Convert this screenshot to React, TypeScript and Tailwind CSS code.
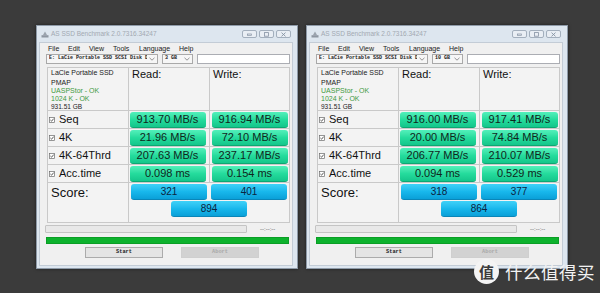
import React from 'react';

type Row = { label: string; read: string; write: string };
type Bench = { size: string; rows: Row[]; score: [string, string, string] };

const benches: Bench[] = [
  {
    size: '3 GB',
    rows: [
      { label: 'Seq', read: '913.70 MB/s', write: '916.94 MB/s' },
      { label: '4K', read: '21.96 MB/s', write: '72.10 MB/s' },
      { label: '4K-64Thrd', read: '207.63 MB/s', write: '237.17 MB/s' },
      { label: 'Acc.time', read: '0.098 ms', write: '0.154 ms' },
    ],
    score: ['321', '401', '894'],
  },
  {
    size: '10 GB',
    rows: [
      { label: 'Seq', read: '916.00 MB/s', write: '917.41 MB/s' },
      { label: '4K', read: '20.00 MB/s', write: '74.84 MB/s' },
      { label: '4K-64Thrd', read: '206.77 MB/s', write: '210.07 MB/s' },
      { label: 'Acc.time', read: '0.094 ms', write: '0.529 ms' },
    ],
    score: ['318', '377', '864'],
  },
];

const menu = [
  { name: 'File', w: 'w-[20px]' },
  { name: 'Edit', w: 'w-[21px]' },
  { name: 'View', w: 'w-[24px]' },
  { name: 'Tools', w: 'w-[26px]' },
  { name: 'Language', w: 'w-[40px]' },
  { name: 'Help', w: 'w-[20px]' },
];

const Chevron = () => (
  <svg width="6" height="4" viewBox="0 0 6 4" className="shrink-0">
    <path d="M0.5 0.8 L3 3.2 L5.5 0.8" fill="none" stroke="#7a7a7a" strokeWidth="0.8" />
  </svg>
);

const Check = () => (
  <svg width="6" height="6" viewBox="0 0 6 6" className="shrink-0">
    <rect x="0.5" y="0.5" width="5" height="5" fill="#fff" stroke="#6b6b6b" strokeWidth="0.7" />
    <path d="M1.4 3 L2.6 4.2 L4.7 1.6" fill="none" stroke="#333" strokeWidth="0.8" />
  </svg>
);

const WinButton = ({ kind }: { kind: 'min' | 'max' | 'close' }) => (
  <div className="w-[15px] h-[8px] rounded-[2px] border border-[#a3afbd] bg-[#e9eef4] flex items-center justify-center">
    <svg width="7" height="5" viewBox="0 0 7 5">
      {kind === 'min' && <rect x="1.5" y="2" width="4" height="1.3" fill="none" stroke="#8592a3" strokeWidth="0.7" />}
      {kind === 'max' && <rect x="1.5" y="0.6" width="4" height="3.6" fill="none" stroke="#8592a3" strokeWidth="0.8" />}
      {kind === 'close' && <path d="M1.5 0.6 L5.5 4.4 M5.5 0.6 L1.5 4.4" stroke="#8592a3" strokeWidth="0.9" />}
    </svg>
  </div>
);

const GreenBox = ({ value }: { value: string }) => (
  <div className="w-[76px] h-[16px] rounded-[3px] bg-linear-to-b from-[#52f0bb] via-[#25dc9d] to-[#14c68b] border-b border-[#0ea772] flex items-center justify-center text-[11px] leading-none text-[#10261c]">
    {value}
  </div>
);

const BlueBox = ({ value }: { value: string }) => (
  <div className="w-[76px] h-[16px] rounded-[3px] bg-linear-to-b from-[#3ed2f8] via-[#18b8ec] to-[#0aa0d8] border-b border-[#0a86b8] flex items-center justify-center text-[10px] leading-none text-[#0b2340]">
    {value}
  </div>
);

const Window = ({ bench }: { bench: Bench }) => (
  <div className="w-[262px] h-[244px] border border-[#8e9aa8] bg-[#dde6ef] flex flex-col shadow-[0_0_3px_rgba(0,0,0,0.5)]">
    {/* Title bar */}
    <div className="h-[16px] flex items-center pl-[4px] pr-[6px]">
      <svg width="8" height="7" viewBox="0 0 8 7" className="shrink-0">
        <path d="M4 0.5 L6 4 L2 4 Z" fill="#9aa3ad" />
        <rect x="0.5" y="4.2" width="7" height="2.3" fill="#8d96a1" />
      </svg>
      <span className="ml-[2px] text-[6.5px] text-[#a2a9b1] leading-none">AS SSD Benchmark 2.0.7316.34247</span>
      <div className="ml-auto flex gap-[2px]">
        <WinButton kind="min" />
        <WinButton kind="max" />
        <WinButton kind="close" />
      </div>
    </div>

    {/* Client area */}
    <div className="ml-[2px] mr-[4px] mb-[2px] flex-1 bg-[#f0f0f0] border border-[#c3ccd6] flex flex-col">
      {/* Menu */}
      <div className="h-[11px] flex items-center pl-[8px] text-[7px] leading-none text-[#222]">
        {menu.map((m) => (
          <span key={m.name} className={m.w}>{m.name}</span>
        ))}
      </div>

      {/* Drive / size / input */}
      <div className="h-[10px] flex items-stretch pl-[6px] gap-[4px] font-['Liberation_Mono',monospace] text-[5px] font-bold text-[#222]">
        <div className="w-[112px] border border-[#a9a9a9] bg-[#f6f6f6] flex items-center pl-[2px] pr-[2px] gap-[2px]">
          <span className="flex-1 whitespace-nowrap overflow-hidden">E: LaCie Portable SSD SCSI Disk D</span>
          <Chevron />
        </div>
        <div className="w-[31px] border border-[#a9a9a9] bg-[#f6f6f6] flex items-center pl-[2px] pr-[2px]">
          <span className="flex-1">{bench.size}</span>
          <Chevron />
        </div>
        <div className="w-[93px] border border-[#abadb3] bg-white" />
      </div>

      {/* Result table */}
      <div className="mt-[3px] ml-[7px] w-[243px] grid grid-cols-[80px_80px_79px] grid-rows-[42px_17px_17px_17px_17px_39px] gap-px p-px bg-[#c9c9c9]">
        <div className="bg-[#f3f3f3] pl-[3px] pt-px text-[7px] leading-[8px]">
          <div className="text-[#222]">LaCie Portable SSD</div>
          <div className="mt-[2px] text-[#222]">PMAP</div>
          <div className="text-[#3f9a3f]">UASPStor - OK</div>
          <div className="text-[#3f9a3f]">1024 K - OK</div>
          <div className="text-[6.5px] text-[#222]">931.51 GB</div>
        </div>
        <div className="bg-[#f3f3f3] pl-[3px] text-[11px] leading-[13px] text-[#111]">Read:</div>
        <div className="bg-[#f3f3f3] pl-[3px] text-[11px] leading-[13px] text-[#111]">Write:</div>

        {bench.rows.map((r) => (
          <React.Fragment key={r.label}>
            <div className="bg-[#f3f3f3] flex items-center pl-px gap-[4px] text-[11px] leading-none text-[#111]">
              <Check />
              <span>{r.label}</span>
            </div>
            <div className="bg-[#f3f3f3] flex items-center justify-center pr-[3px]">
              <GreenBox value={r.read} />
            </div>
            <div className="bg-[#f3f3f3] flex items-center justify-center">
              <GreenBox value={r.write} />
            </div>
          </React.Fragment>
        ))}

        <div className="bg-[#f3f3f3] pl-[3px] pt-[3px] text-[13px] leading-[13px] text-[#111]">Score:</div>
        <div className="col-span-2 bg-[#f3f3f3] flex flex-col items-center pt-[1px] gap-[1px]">
          <div className="flex gap-[4px] pl-[2px] self-start">
            <BlueBox value={bench.score[0]} />
            <BlueBox value={bench.score[1]} />
          </div>
          <div className="h-[17px] flex">
            <BlueBox value={bench.score[2]} />
          </div>
        </div>
      </div>

      {/* Progress */}
      <div className="mt-[2px] ml-[5px] h-[8px] flex items-center">
        <div className="w-[202px] h-[8px] rounded-[1px] border border-[#c4c4c4] bg-[#e8e8e8]" />
        <span className="ml-[13px] text-[6px] leading-none text-[#555]">--:--:--</span>
      </div>
      <div className="mt-[4px] ml-[6px] w-[243px] h-[7px] bg-[#0db22d] border border-[#0a9e25]" />

      {/* Buttons */}
      <div className="mt-[3px] ml-[45px] flex gap-[18px] font-['Liberation_Mono',monospace] text-[5.3px] font-bold">
        <div className="w-[78px] h-[11px] border border-[#ababab] bg-[#e4e4e4] flex items-center justify-center text-[#222]">
          Start
        </div>
        <div className="w-[78px] h-[11px] border border-[#cfcfcf] bg-[#d2d2d2] flex items-center justify-center text-[#a9a9a9]">
          Abort
        </div>
      </div>
    </div>
  </div>
);

export default function App() {
  return (
    <div className="relative w-[600px] h-[293px] overflow-hidden bg-[#3b3b3b] font-['Liberation_Sans',Arial,sans-serif]">
      <div className="flex gap-[8px] pt-[25px] pl-[36px]">
        {benches.map((b) => (
          <Window key={b.size} bench={b} />
        ))}
      </div>

      {/* Watermark */}
      <div className="absolute left-[474px] top-[259px] flex items-center gap-[6px]">
        <div className="w-[25px] h-[25px] rounded-full bg-[#f4f4f4] flex items-center justify-center text-[15px] leading-none font-bold text-[#3b3b3b] font-['Noto_Sans_CJK_SC',sans-serif]">
          值
        </div>
        <span className="text-[17.5px] leading-none text-[#f2f2f2] font-['Noto_Sans_CJK_SC',sans-serif] tracking-[0.5px]">
          什么值得买
        </span>
      </div>
    </div>
  );
}
